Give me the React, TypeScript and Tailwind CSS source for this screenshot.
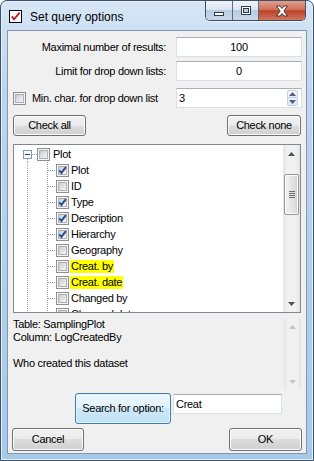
import React from "react";

// Tree content of the options dialog
const fields = [
  { label: "Plot", checked: true },
  { label: "ID", checked: false },
  { label: "Type", checked: true },
  { label: "Description", checked: true },
  { label: "Hierarchy", checked: true },
  { label: "Geography", checked: false },
  { label: "Creat. by", checked: false, hit: true },
  { label: "Creat. date", checked: false, hit: true },
  { label: "Changed by", checked: false },
  { label: "Changed date", checked: false },
];

const btn =
  "flex items-center justify-center rounded-[3px] border border-[#707070] bg-[linear-gradient(#f2f2f2_0%,#ebebeb_50%,#dddddd_50%,#cfcfcf_100%)] shadow-[inset_0_0_0_1px_#fbfbfb]";

const CheckBox = ({ checked = false }: { checked?: boolean }) => (
  <div className="relative h-[13px] w-[13px] shrink-0 border border-[#8e8f8f] bg-[#f4f4f4] p-px">
    <div className="h-full w-full border border-[#aeb2b8] bg-[linear-gradient(135deg,#c8ccd2,#f5f5f5)]" />
    {checked && (
      <svg className="absolute left-0 top-0" width="11" height="11" viewBox="0 0 11 11">
        <path d="M2.3 5.3 L4.4 7.9 L8.9 2.1" fill="none" stroke="#2d4b93" strokeWidth="1.9" />
      </svg>
    )}
  </div>
);

const TextBox = ({ value, className = "" }: { value: string; className?: string }) => (
  <div
    className={`flex h-[20px] items-center border border-[#dbdfe6] border-t-[#abadb3] bg-white px-[2px] ${className}`}
  >
    {value}
  </div>
);

const Arrow = ({ up, color = "#1e1e1e" }: { up?: boolean; color?: string }) => (
  <svg width="7" height="4" viewBox="0 0 7 4">
    <path d={up ? "M0 4 L3.5 0 L7 4 Z" : "M0 0 L7 0 L3.5 4 Z"} fill={color} />
  </svg>
);

// Windows 7 style vertical scroll bar
const ScrollBar = ({ disabled = false }: { disabled?: boolean }) => (
  <div className="flex w-[17px] shrink-0 flex-col bg-[linear-gradient(90deg,#e4e4e4,#f1f1f1_25%,#f1f1f1_75%,#e4e4e4)]">
    <div className="flex h-[17px] items-center justify-center">
      <Arrow up color={disabled ? "#c4c4c4" : "#505050"} />
    </div>
    <div className="flex-1">
      {!disabled && (
        <div className="mx-px mt-[12px] flex h-[41px] items-center justify-center rounded-[2px] border border-[#979797] bg-[linear-gradient(90deg,#f2f2f2,#e6e6e6_50%,#d5d5d5)] shadow-[inset_0_0_0_1px_#fbfbfb]">
          <div className="flex flex-col gap-px">
            {[0, 1, 2, 3].map((i) => (
              <div key={i} className="h-px w-[6px] bg-[#6d6d6d]" />
            ))}
          </div>
        </div>
      )}
    </div>
    <div className="flex h-[17px] items-center justify-center">
      <Arrow color={disabled ? "#c4c4c4" : "#505050"} />
    </div>
  </div>
);

const TitleBar = () => (
  <div className="flex h-[29px] shrink-0">
    <div className="mt-[9px] ml-[8px] flex h-[13px] w-[13px] items-center justify-center border border-black bg-white">
      <svg width="11" height="11" viewBox="0 0 11 11">
        <path d="M1.8 5.4 L4 8.4 L9.6 1.6" fill="none" stroke="#c8102e" strokeWidth="1.8" />
      </svg>
    </div>
    <div className="mt-[7px] ml-[8px] text-[12px] text-black">Set query options</div>
    <div className="ml-auto mr-[7px] flex h-[20px] overflow-hidden rounded-b-[5px] border border-t-0 border-[#3e4f63] shadow-[0_1px_0_#e9f1fa]">
      <div className="flex w-[27px] items-center justify-center border-r border-[#5a6d84] bg-[linear-gradient(#eef3f9,#dbe6f2_45%,#b9cce2_50%,#c8d8ea)]">
        <svg width="12" height="14" viewBox="0 0 12 14">
          <rect x="1.5" y="8.5" width="9" height="3" fill="#fff" stroke="#2f3d4e" />
        </svg>
      </div>
      <div className="flex w-[26px] items-center justify-center border-r border-[#5a6d84] bg-[linear-gradient(#eef3f9,#dbe6f2_45%,#b9cce2_50%,#c8d8ea)]">
        <svg width="12" height="12" viewBox="0 0 12 12">
          <rect x="1.5" y="1.5" width="9" height="8" fill="#fff" stroke="#2f3d4e" />
          <rect x="3.5" y="3.5" width="5" height="4" fill="#b9cce2" stroke="#2f3d4e" />
        </svg>
      </div>
      <div className="flex w-[46px] items-center justify-center bg-[linear-gradient(#e2a090,#d0705a_45%,#be4127_52%,#cf7660)]">
        <svg width="14" height="12" viewBox="0 0 14 12">
          <path
            d="M1.5 1 L5 1 L7 3.5 L9 1 L12.5 1 L8.8 6 L12.5 11 L9 11 L7 8.5 L5 11 L1.5 11 L5.2 6 Z"
            fill="#fff"
            stroke="#3a2a2a"
            strokeWidth="0.9"
            strokeLinejoin="round"
          />
        </svg>
      </div>
    </div>
  </div>
);

const TreeRow = ({
  label,
  checked,
  hit,
  root,
}: {
  label: string;
  checked: boolean;
  hit?: boolean;
  root?: boolean;
}) => (
  <div className="flex h-[16px] items-center">
    {root ? (
      <>
        <svg className="shrink-0" width="23" height="16" viewBox="0 0 23 16">
          <rect x="9.5" y="4.5" width="8" height="8" fill="#fff" stroke="#7f9db9" />
          <path d="M11 8.5 H16" stroke="#1d3a82" />
          <path d="M18 8.5 H23" stroke="#a0a0a0" strokeDasharray="1 1" />
          <path d="M13.5 13 V16" stroke="#a0a0a0" strokeDasharray="1 1" />
        </svg>
        <CheckBox checked={checked} />
        <span className="ml-[2px] px-px">{label}</span>
      </>
    ) : (
      <>
        <svg className="shrink-0" width="42" height="16" viewBox="0 0 42 16">
          <path d="M13.5 0 V16" stroke="#a0a0a0" strokeDasharray="1 1" />
          <path d="M33.5 0 V16" stroke="#a0a0a0" strokeDasharray="1 1" />
          <path d="M34 8.5 H42" stroke="#a0a0a0" strokeDasharray="1 1" />
        </svg>
        <CheckBox checked={checked} />
        <span className={`ml-px px-px leading-[13px] ${hit ? "bg-[#ffff00]" : ""}`}>{label}</span>
      </>
    )}
  </div>
);

export default function App() {
  return (
    <div className="flex h-[461px] w-[314px] flex-col overflow-hidden rounded-t-[7px] border border-[#3f5168] bg-[linear-gradient(#d6e6f6,#bcd5ee_20%,#a6c9ea_100%)] font-['Liberation_Sans',Arial,sans-serif] shadow-[inset_0_0_0_1px_#e6f0fa]">
      <TitleBar />

      <div className="mx-[6px] mb-[6px] flex flex-1 flex-col border border-[#8297ae] bg-[#f0f0f0] text-[11px] tracking-[-0.3px] text-black">
        {/* numeric options */}
        <div className="mt-[6px] flex items-center">
          <div className="w-[158px] text-right">Maximal number of results:</div>
          <TextBox value="100" className="ml-[10px] w-[126px] justify-center" />
        </div>
        <div className="mt-[4px] flex items-center">
          <div className="w-[158px] text-right">Limit for drop down lists:</div>
          <TextBox value="0" className="ml-[10px] w-[126px] justify-center" />
        </div>
        <div className="mt-[7px] flex items-center">
          <div className="ml-[5px]">
            <CheckBox />
          </div>
          <div className="ml-[6px]">Min. char. for drop down list</div>
          <div className="ml-auto mr-[4px] flex h-[20px] w-[126px] items-center border border-[#dbdfe6] border-t-[#abadb3] bg-white pl-[2px]">
            <span className="flex-1">3</span>
            <div className="mr-[3px] flex flex-col">
              <div className="flex h-[8px] w-[11px] items-center justify-center rounded-t-[2px] border border-[#c3cfdc] bg-[linear-gradient(#f7f9fc,#e6edf5)]">
                <Arrow up color="#4d6185" />
              </div>
              <div className="flex h-[8px] w-[11px] items-center justify-center rounded-b-[2px] border border-t-0 border-[#c3cfdc] bg-[linear-gradient(#eef3f8,#dfe7f1)]">
                <Arrow color="#4d6185" />
              </div>
            </div>
          </div>
        </div>

        {/* check buttons */}
        <div className="mt-[7px] flex">
          <div className={`${btn} ml-[5px] h-[21px] w-[73px]`}>Check all</div>
          <div className={`${btn} ml-auto mr-[5px] h-[21px] w-[74px]`}>Check none</div>
        </div>

        {/* tree */}
        <div className="mx-[5px] mt-[8px] flex h-[169px] border border-[#828790] bg-white">
          <div className="flex-1 overflow-hidden pt-px">
            <TreeRow label="Plot" checked={false} root />
            {fields.map((f) => (
              <TreeRow key={f.label} label={f.label} checked={f.checked} hit={f.hit} />
            ))}
          </div>
          <ScrollBar />
        </div>

        {/* description */}
        <div className="mx-[5px] mt-[5px] flex h-[72px]">
          <div className="flex-1 leading-[13px]">
            <div>Table: SamplingPlot</div>
            <div>Column: LogCreatedBy</div>
            <div>&nbsp;</div>
            <div>Who created this dataset</div>
          </div>
          <ScrollBar disabled />
        </div>

        {/* search */}
        <div className="mt-[3px] flex items-start">
          <div className="ml-[67px] flex h-[31px] w-[96px] items-center justify-center rounded-[3px] border border-[#3c7fb1] bg-[linear-gradient(#eef7fd_0%,#e0f1fb_50%,#cde9f9_50%,#bfe1f5_100%)] shadow-[inset_0_0_0_1px_#e4f3fc]">
            Search for option:
          </div>
          <div className="ml-[2px] mt-px flex h-[20px] w-[109px] items-start border border-[#dbdfe6] border-t-[#abadb3] bg-white px-[2px] pt-px">
            Creat
          </div>
        </div>

        {/* dialog buttons */}
        <div className="mt-[4px] flex">
          <div className={`${btn} ml-[4px] h-[23px] w-[72px]`}>Cancel</div>
          <div className={`${btn} ml-auto mr-[4px] h-[23px] w-[73px]`}>OK</div>
        </div>
      </div>
    </div>
  );
}
